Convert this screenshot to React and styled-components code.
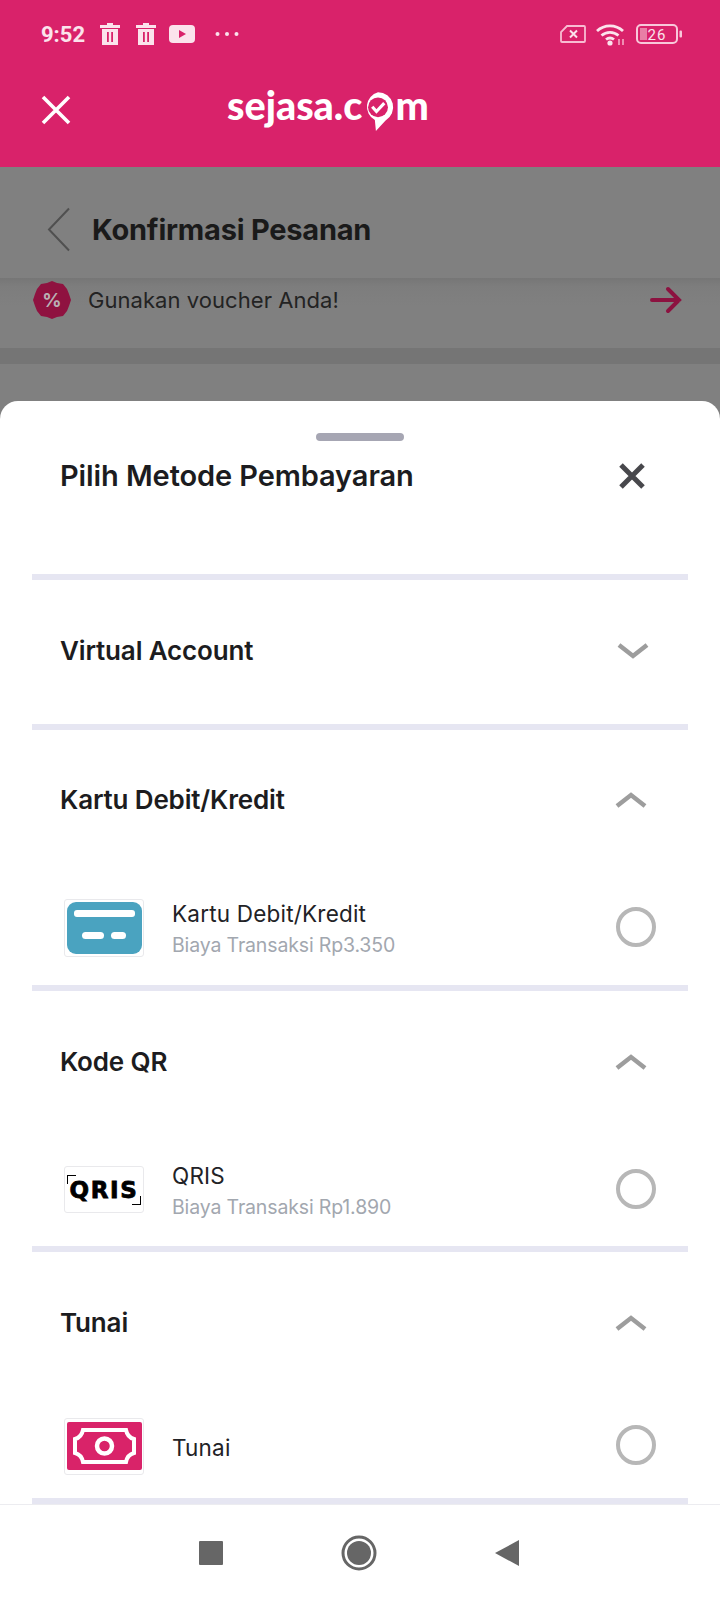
import React from "react";
import styled, { createGlobalStyle } from "styled-components";

const Global = createGlobalStyle`
  html, body { margin: 0; padding: 0; background: #fff; }
  * { box-sizing: border-box; }
`;

const Page = styled.div`
  width: 720px;
  height: 1600px;
  display: flex;
  flex-direction: column;
  overflow: hidden;
  font-family: "Inter", "Liberation Sans", sans-serif;
  color: #1e1e22;
`;

const Header = styled.header`
  height: 167px;
  background: #d9226a;
  padding: 0 37px 0 41px;
  display: flex;
  flex-direction: column;
  flex: none;
`;
const StatusBar = styled.div`
  height: 68px;
  display: flex;
  align-items: center;
  justify-content: space-between;
`;
const StatusGroup = styled.div`
  display: flex;
  align-items: center;
  gap: ${(p) => p.$gap || 0}px;
`;
const Clock = styled.span`
  font: 700 22px "Roboto", sans-serif;
  color: #fbe3ec;
  width: 59px;
`;
const AppBar = styled.div`
  display: flex;
  align-items: center;
  height: 84px;
`;
const Logo = styled.div`
  margin-left: 156px;
  margin-top: -11px;
  font: 900 39.5px "Lato", sans-serif;
  color: #fff;
  display: flex;
  align-items: center;
  line-height: 44px;
`;
const BubbleMark = styled.svg`
  width: 36px;
  height: 44px;
  margin: 12px -1px 0 -2px;
`;

const Backdrop = styled.div`
  height: 253px;
  flex: none;
  background: #808080;
  display: flex;
  flex-direction: column;
`;
const TitleBar = styled.div`
  height: 111px;
  display: flex;
  align-items: center;
  gap: 21px;
  padding: 14px 0 0 47px;
  flex: none;
`;
const ScreenTitle = styled.h1`
  margin: 0;
  font-size: 29px;
  font-weight: 700;
  letter-spacing: -0.23px;
  color: #1a1a1a;
`;
const VoucherRow = styled.div`
  height: 70px;
  flex: none;
  padding: 0 38px 27px 33px;
  display: flex;
  align-items: center;
  background: linear-gradient(#767676, #7d7d7d 12%, #808080 40%);
`;
const VoucherText = styled.span`
  font-size: 22px;
  color: #232323;
  margin-left: 17px;
  flex: 1;
  letter-spacing: 0.05px;
`;
const Band = styled.div`
  height: 16px;
  flex: none;
  background: #757575;
`;

const Sheet = styled.section`
  flex: 1;
  min-height: 0;
  margin-top: -19px;
  background: #fff;
  border-radius: 18px 18px 0 0;
  display: flex;
  flex-direction: column;
  position: relative;
`;
const Handle = styled.div`
  width: 88px;
  height: 8px;
  border-radius: 4px;
  background: #a6a6b3;
  margin: 32px auto 0;
  flex: none;
`;
const SheetHead = styled.div`
  height: 133px;
  padding: 15px 74px 0 60px;
  display: flex;
  justify-content: space-between;
  align-items: flex-start;
  flex: none;
`;
const SheetTitle = styled.h2`
  margin: 0;
  font-size: 29px;
  line-height: 40px;
  font-weight: 600;
  letter-spacing: -0.1px;
  color: #1c1c20;
`;
const Group = styled.div`
  margin: 0 32px;
  border-top: 6px solid #e6e6f2;
  flex: none;
`;
const GroupHead = styled.div`
  height: ${(p) => p.$h}px;
  display: flex;
  align-items: center;
  justify-content: space-between;
  padding: 0 ${(p) => (p.$open ? 40 : 38)}px ${(p) => (p.$open ? 0 : 3)}px 28px;
`;
const GroupTitle = styled.h3`
  margin: -1px 0 0;
  font-size: 26px;
  font-weight: 600;
  letter-spacing: -0.15px;
  color: #1c1c20;
`;
const MethodRow = styled.div`
  height: ${(p) => p.$h}px;
  display: flex;
  align-items: center;
  padding: 0 32px 0 32px;
`;
const IconFrame = styled.div`
  width: 80px;
  height: ${(p) => p.$h}px;
  flex: none;
  border: 1px solid #e9e9ec;
  border-radius: 3px;
  background: #fff;
  display: flex;
  align-items: center;
  justify-content: center;
  overflow: hidden;
`;
const MethodText = styled.div`
  flex: 1;
  margin-left: 28px;
  padding-top: 3px;
  display: flex;
  flex-direction: column;
  gap: 4px;
`;
const MethodName = styled.span`
  font-size: 22.5px;
  line-height: 28px;
  letter-spacing: 0.2px;
  color: #222226;
`;
const MethodFee = styled.span`
  font-size: 19.5px;
  line-height: 26px;
  letter-spacing: -0.15px;
  color: #a2a7af;
`;
const Radio = styled.div`
  width: 40px;
  height: 40px;
  margin-top: -2px;
  border-radius: 50%;
  border: 4px solid #b7b7b7;
  flex: none;
`;

const QrisMark = styled.div`
  position: relative;
  padding: 1px 3px;
  font: 700 23px/26px "DejaVu Sans", sans-serif;
  letter-spacing: 1.6px;
  color: #000;
  -webkit-text-stroke: 0.8px #000;
  &::before, &::after {
    content: "";
    position: absolute;
    width: 8px;
    height: 8px;
    border: 1px solid #000;
  }
  &::before { left: 0; top: -1px; border-right: 0; border-bottom: 0; }
  &::after { right: 0; bottom: -1px; border-left: 0; border-top: 0; }
`;

const NavBar = styled.nav`
  height: 96px;
  flex: none;
  background: #fff;
  border-top: 1px solid #ececf0;
  display: flex;
  align-items: center;
  justify-content: center;
  padding: 0 3px 0 0;
  position: relative;
  margin-top: -1px;
`;
const NavSlot = styled.div`
  width: 148px;
  display: flex;
  justify-content: center;
`;

const Chevron = ({ up }) => (
  <svg width="34" height="20" viewBox="0 0 34 20">
    <path d={up ? "M3 16 L17 5 L31 16" : "M3 4 L17 15 L31 4"} fill="none" stroke="#9d9d9d" strokeWidth="4.5" strokeLinejoin="miter" />
  </svg>
);

const Trash = () => (
  <svg width="20" height="22" viewBox="0 0 20 22">
    <path d="M7 0h6v2h7v3H0V2h7z M2 6h16v16H2z" fill="#fbe3ec" />
    <path d="M7 9h1.8v10H7z M11.2 9H13v10h-1.8z" fill="#d9226a" />
  </svg>
);

const PayGroup = ({ h, title, open, children }) => (
  <Group>
    <GroupHead $h={h} $open={open}>
      <GroupTitle>{title}</GroupTitle>
      <Chevron up={open} />
    </GroupHead>
    {children}
  </Group>
);

export default function App() {
  return (
    <Page>
      <Global />
      <Header>
        <StatusBar>
          <StatusGroup>
            <Clock>9:52</Clock>
            <StatusGroup $gap={16}>
              <Trash />
              <Trash />
              <svg width="26" height="18" viewBox="0 0 26 18" style={{ marginLeft: -3 }}>
                <rect width="26" height="18" rx="4" fill="#fbe3ec" />
                <path d="M10 5l7 4-7 4z" fill="#d9226a" />
              </svg>
            </StatusGroup>
            <svg width="24" height="6" viewBox="0 0 24 6" style={{ marginLeft: 20 }}>
              <circle cx="2.5" cy="3" r="2" fill="#fbe3ec" />
              <circle cx="12" cy="3" r="2" fill="#fbe3ec" />
              <circle cx="21.5" cy="3" r="2" fill="#fbe3ec" />
            </svg>
          </StatusGroup>
          <StatusGroup $gap={10}>
            <svg width="26" height="18" viewBox="0 0 26 18">
              <path d="M7 1h17a1 1 0 0 1 1 1v14a1 1 0 0 1-1 1H2a1 1 0 0 1-1-1V7z" fill="none" stroke="#f8bcd2" strokeWidth="1.8" />
              <path d="M10 5.500l7 7M17 5.500l-7 7" stroke="#fbe3ec" strokeWidth="2" />
            </svg>
            <svg width="30" height="23" viewBox="0 0 30 23">
              <path d="M1 8a19 19 0 0 1 26 0M5.500 12.500a13 13 0 0 1 17 0M10 16.500a6.500 6.500 0 0 1 8 0" fill="none" stroke="#fbe3ec" strokeWidth="2.8" />
              <circle cx="14" cy="20" r="2.600" fill="#fbe3ec" />
              <path d="M23 16v6M27 16v6" stroke="#f8bcd2" strokeWidth="1.4" />
            </svg>
            <svg width="47" height="20" viewBox="0 0 47 20">
              <rect x="1" y="1" width="40" height="18" rx="4" fill="none" stroke="#f8c8da" strokeWidth="2" />
              <rect x="4" y="4" width="7" height="12" fill="#e87fa6" />
              <rect x="43.500" y="6.500" width="2.500" height="7" rx="1" fill="#f8c8da" />
              <text x="21" y="15.500" textAnchor="middle" fontFamily="Roboto, sans-serif" fontSize="15" letterSpacing="1" fill="#fbe3ec">26</text>
            </svg>
          </StatusGroup>
        </StatusBar>
        <AppBar>
          <svg width="30" height="30" viewBox="0 0 30 30">
            <path d="M2 2 L28 28 M28 2 L2 28" stroke="#fff" strokeWidth="3.6" />
          </svg>
          <Logo>
            sejasa.c
            <BubbleMark viewBox="0 0 34 42">
              <path d="M17 3a14.500 14.500 0 0 1 7 27.200L15 40l-1-10.300A14.500 14.500 0 0 1 17 3z" fill="#fff" />
              <circle cx="17" cy="17.500" r="9.500" fill="#d9226a" />
              <path d="M11.500 17l4 4.500 7.500-8" fill="none" stroke="#fff" strokeWidth="3" />
            </BubbleMark>
            m
          </Logo>
        </AppBar>
      </Header>

      <Backdrop>
        <TitleBar>
          <svg width="24" height="45" viewBox="0 0 24 45">
            <path d="M22 1.500 L2 22.500 L22 43.500" fill="none" stroke="#505050" strokeWidth="2" />
          </svg>
          <ScreenTitle>Konfirmasi Pesanan</ScreenTitle>
        </TitleBar>
        <VoucherRow>
          <svg width="38" height="38" viewBox="0 0 38 38">
            <path d="M19 0l5 2 6 1 4 5 2 5 2 6-2 6-2 5-4 5-6 1-5 2-5-2-6-1-4-5-2-5-2-6 2-6 2-5 4-5 6-1z" fill="#8f1240" />
            <text x="19" y="26" textAnchor="middle" fontFamily="Inter, sans-serif" fontWeight="700" fontSize="19" fill="#b9b0b4">%</text>
          </svg>
          <VoucherText>Gunakan voucher Anda!</VoucherText>
          <svg width="32" height="28" viewBox="0 0 32 28">
            <path d="M2 14h27M18 3l11 11-11 11" fill="none" stroke="#8c1240" strokeWidth="4" strokeLinecap="round" />
          </svg>
        </VoucherRow>
        <Band />
      </Backdrop>

      <Sheet>
        <Handle />
        <SheetHead>
          <SheetTitle>Pilih Metode Pembayaran</SheetTitle>
          <svg width="28" height="28" viewBox="0 0 28 28" style={{ marginTop: 6 }}>
            <path d="M3 3 L25 25 M25 3 L3 25" stroke="#48484c" strokeWidth="5" />
          </svg>
        </SheetHead>

        <PayGroup h={144} title="Virtual Account" />

        <PayGroup h={140} title="Kartu Debit/Kredit" open>
          <MethodRow $h={115}>
            <IconFrame $h={58}>
              <svg width="75" height="52" viewBox="0 0 75 52">
                <rect width="75" height="52" rx="9" fill="#4aa3c0" />
                <rect x="7" y="8" width="61" height="7" rx="3" fill="#fff" />
                <rect x="15" y="30" width="22" height="7" rx="3.500" fill="#fff" />
                <rect x="44" y="30" width="15" height="7" rx="3.500" fill="#fff" />
              </svg>
            </IconFrame>
            <MethodText>
              <MethodName>Kartu Debit/Kredit</MethodName>
              <MethodFee>Biaya Transaksi Rp3.350</MethodFee>
            </MethodText>
            <Radio />
          </MethodRow>
        </PayGroup>

        <PayGroup h={142} title="Kode QR" open>
          <MethodRow $h={113}>
            <IconFrame $h={47}>
              <QrisMark>QRIS</QrisMark>
            </IconFrame>
            <MethodText>
              <MethodName>QRIS</MethodName>
              <MethodFee>Biaya Transaksi Rp1.890</MethodFee>
            </MethodText>
            <Radio />
          </MethodRow>
        </PayGroup>

        <PayGroup h={142} title="Tunai" open>
          <MethodRow $h={104}>
            <IconFrame $h={57}>
              <svg width="75" height="48" viewBox="0 0 75 48">
                <rect width="75" height="48" rx="2" fill="#d92369" />
                <path d="M16 8h43c1 5 4 8 8 9v14c-4 1-7 4-8 9H16c-1-5-4-8-8-9V17c4-1 7-4 8-9z" fill="none" stroke="#fff" strokeWidth="4" />
                <circle cx="37.500" cy="24" r="7.500" fill="none" stroke="#fff" strokeWidth="4.500" />
              </svg>
            </IconFrame>
            <MethodText>
              <MethodName>Tunai</MethodName>
            </MethodText>
            <Radio />
          </MethodRow>
        </PayGroup>
        <Group />
      </Sheet>

      <NavBar>
        <NavSlot>
          <svg width="24" height="24" viewBox="0 0 24 24"><rect width="24" height="24" rx="1" fill="#666" /></svg>
        </NavSlot>
        <NavSlot>
          <svg width="36" height="36" viewBox="0 0 36 36">
            <circle cx="18" cy="18" r="16" fill="none" stroke="#666" strokeWidth="3" />
            <circle cx="18" cy="18" r="12" fill="#666" />
          </svg>
        </NavSlot>
        <NavSlot>
          <svg width="26" height="26" viewBox="0 0 26 26"><path d="M1 13 L25 0 V26 Z" fill="#666" /></svg>
        </NavSlot>
      </NavBar>
    </Page>
  );
}
